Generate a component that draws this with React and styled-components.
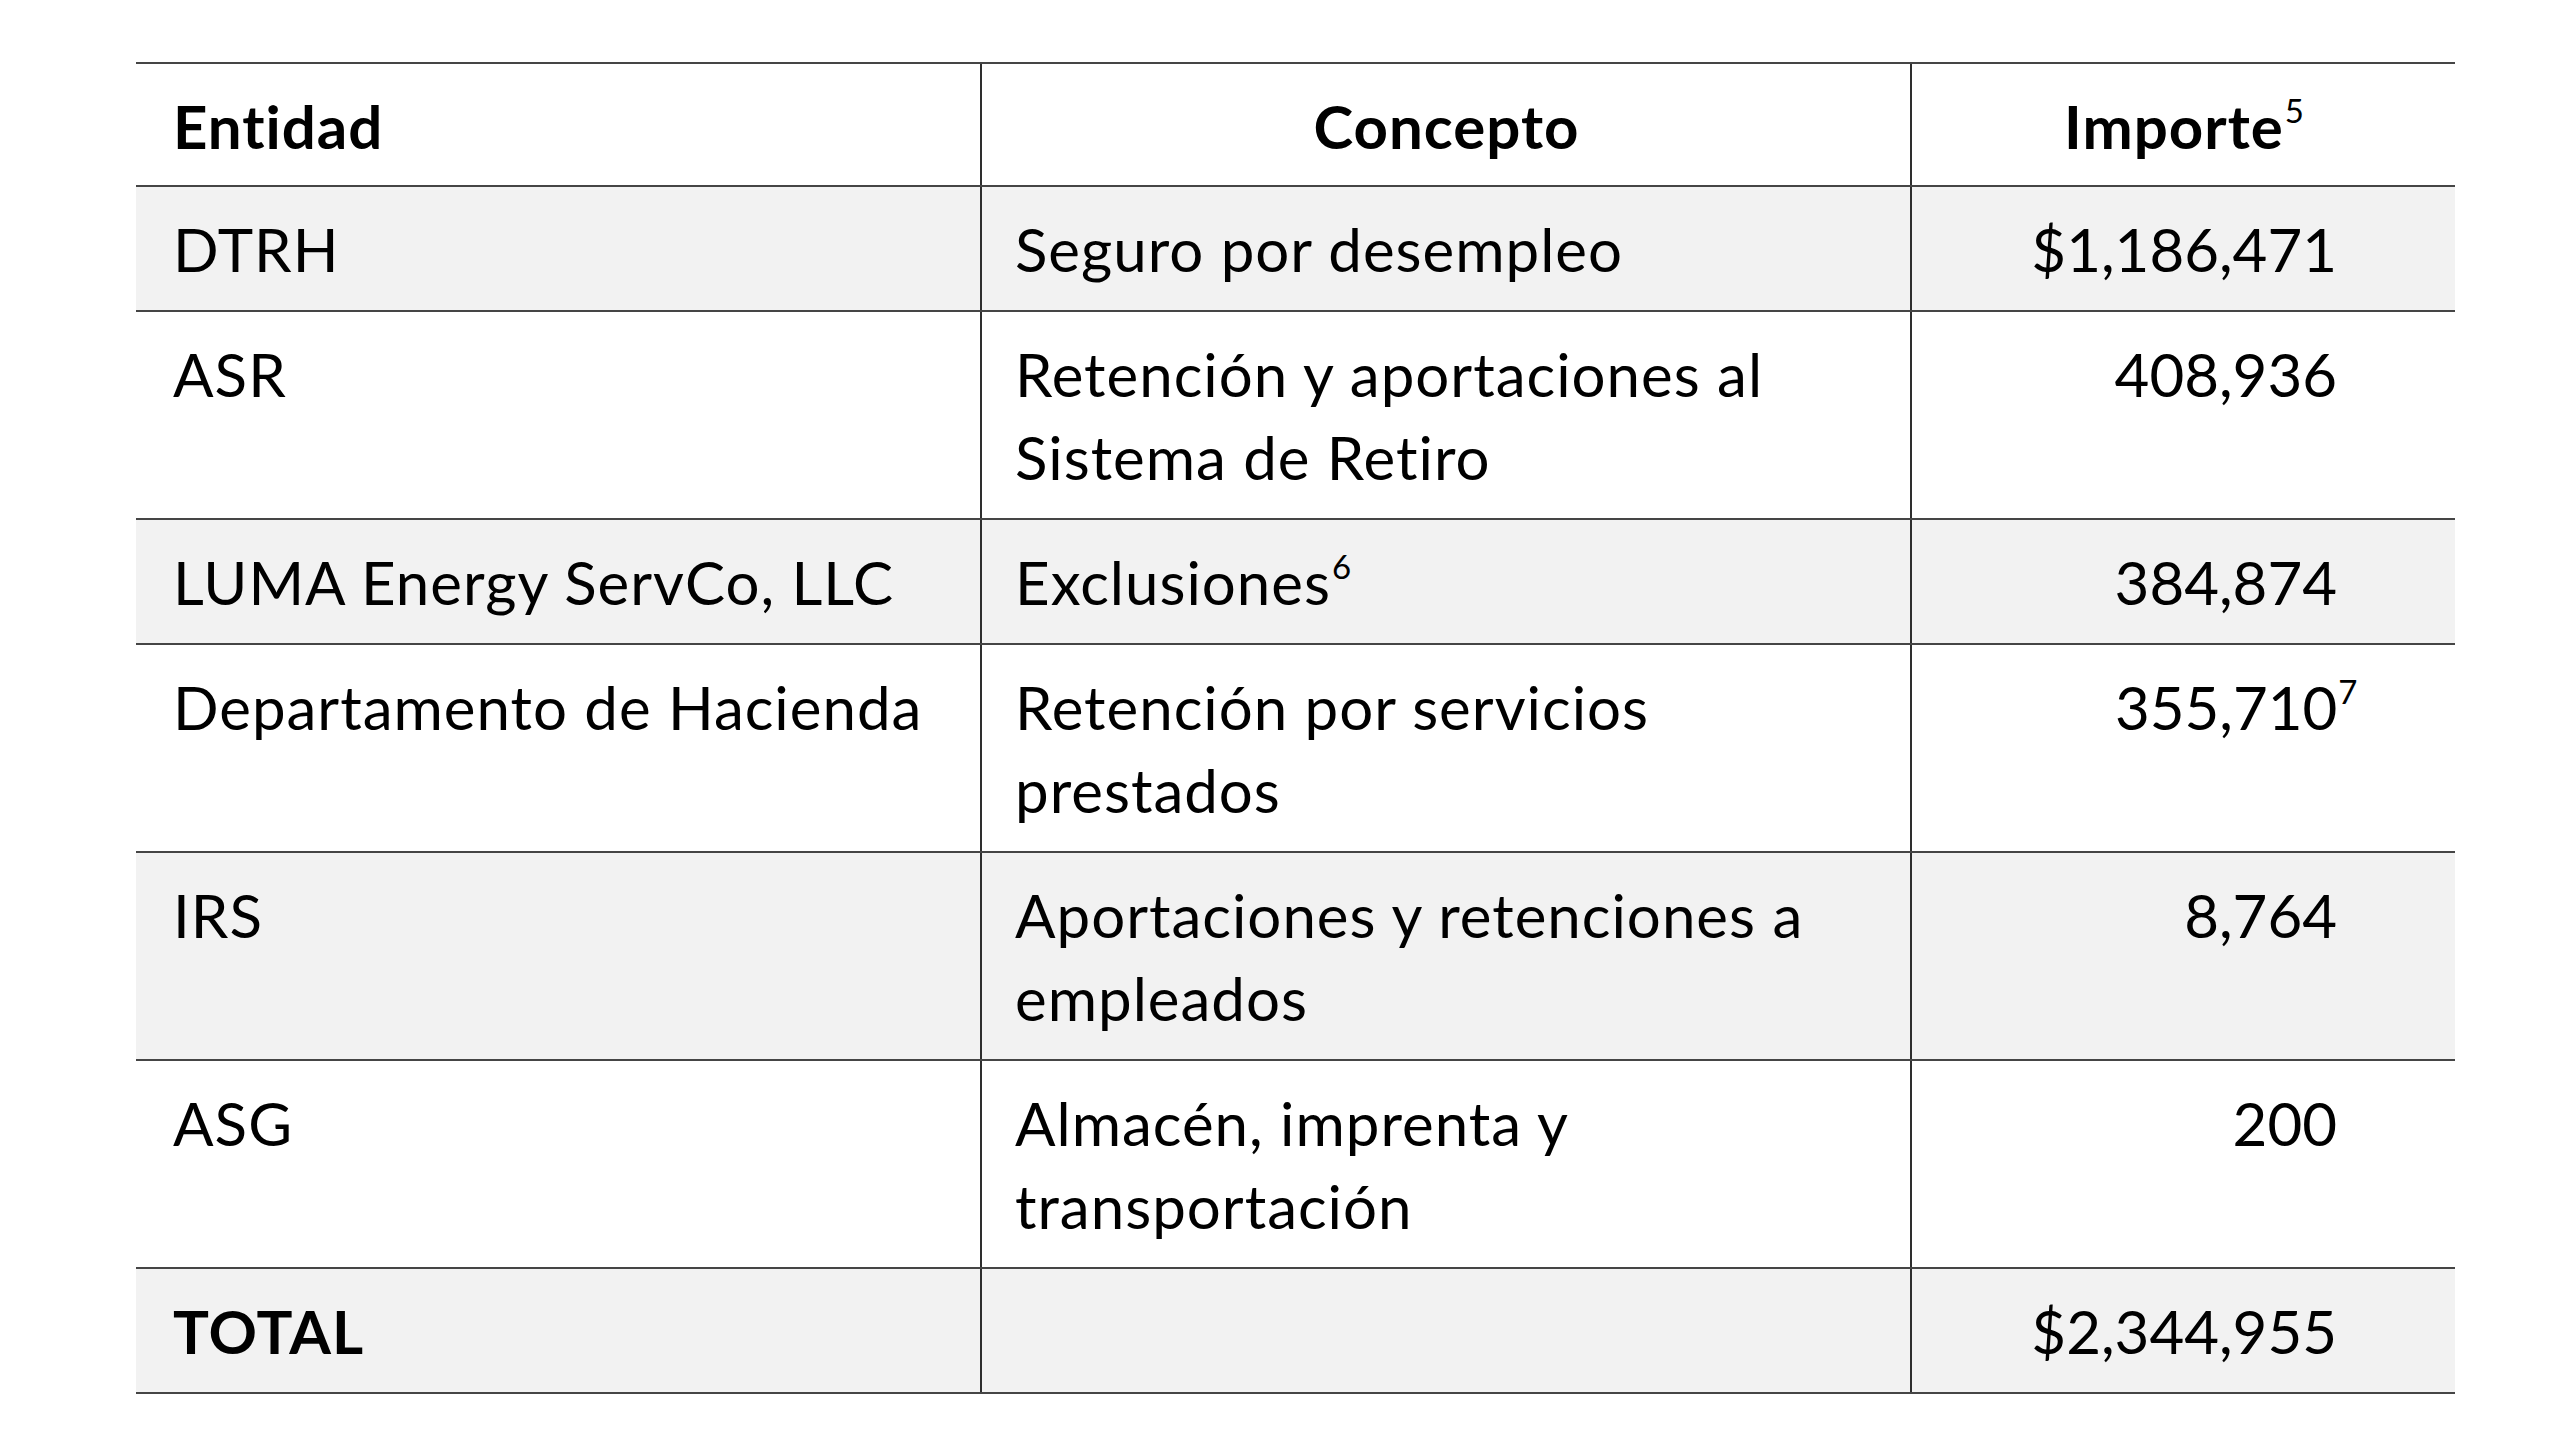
import React from "react";
import styled, { createGlobalStyle } from "styled-components";

const GlobalStyle = createGlobalStyle`
  html, body {
    margin: 0;
    padding: 0;
    background: #ffffff;
  }
  body {
    font-family: Lato, "Open Sans", "Liberation Sans", sans-serif;
    color: #000;
  }
`;

const Page = styled.div`
  width: 2560px;
  height: 1454px;
  box-sizing: border-box;
  padding: 62px 0 0 136px;
  overflow: hidden;
  background: #fff;
`;

const Table = styled.div`
  width: 2319px;
  display: flex;
  flex-direction: column;
  border-bottom: 2px solid #454545;
`;

const Row = styled.div`
  display: grid;
  grid-template-columns: 844px 930px 545px;
  border-top: 2px solid #454545;
  background: ${(p) => (p.$shaded ? "#f2f2f2" : "#ffffff")};
`;

const Cell = styled.div`
  box-sizing: border-box;
  padding: 21px ${(p) => (p.$align === "right" ? "118px" : "32px")}
    ${(p) => (p.$head ? "17px" : "19px")} ${(p) => (p.$first ? "37px" : "33px")};
  border-left: ${(p) => (p.$first ? "none" : "2px solid #2e2e2e")};
  font-size: 60px;
  letter-spacing: ${(p) => (p.$align === "right" ? "0" : "1px")};
  line-height: 83px;
  font-weight: ${(p) => (p.$bold ? 700 : 400)};
  text-align: ${(p) => p.$align || "left"};
  white-space: nowrap;
`;

const Sup = styled.sup`
  font-size: 0.55em;
  line-height: 0;
  vertical-align: 0;
  position: relative;
  top: -0.78em;
  font-weight: 400;
  letter-spacing: 0;
  margin-left: 1px;
  margin-right: ${(p) => (p.$hang ? "-0.62em" : "0")};
`;

const rows = [
  { a: "DTRH", b: ["Seguro por desempleo"], c: "$1,186,471" },
  { a: "ASR", b: ["Retención y aportaciones al", "Sistema de Retiro"], c: "408,936" },
  { a: "LUMA Energy ServCo, LLC", b: ["Exclusiones"], bSup: "6", c: "384,874" },
  { a: "Departamento de Hacienda", b: ["Retención por servicios", "prestados"], c: "355,710", cSup: "7" },
  { a: "IRS", b: ["Aportaciones y retenciones a", "empleados"], c: "8,764" },
  { a: "ASG", b: ["Almacén, imprenta y", "transportación"], c: "200" },
];

export default function App() {
  return (
    <>
      <GlobalStyle />
      <Page>
        <Table>
          <Row>
            <Cell $first $bold $head>Entidad</Cell>
            <Cell $bold $head $align="center">Concepto</Cell>
            <Cell $bold $head $align="center">
              Importe<Sup>5</Sup>
            </Cell>
          </Row>
          {rows.map((r, i) => (
            <Row key={r.a} $shaded={i % 2 === 0}>
              <Cell $first>{r.a}</Cell>
              <Cell>
                {r.b.map((line, j) => (
                  <React.Fragment key={j}>
                    {j > 0 && <br />}
                    {line}
                  </React.Fragment>
                ))}
                {r.bSup && <Sup>{r.bSup}</Sup>}
              </Cell>
              <Cell $align="right">
                {r.c}
                {r.cSup && <Sup $hang>{r.cSup}</Sup>}
              </Cell>
            </Row>
          ))}
          <Row $shaded>
            <Cell $first $bold>TOTAL</Cell>
            <Cell />
            <Cell $align="right">$2,344,955</Cell>
          </Row>
        </Table>
      </Page>
    </>
  );
}
